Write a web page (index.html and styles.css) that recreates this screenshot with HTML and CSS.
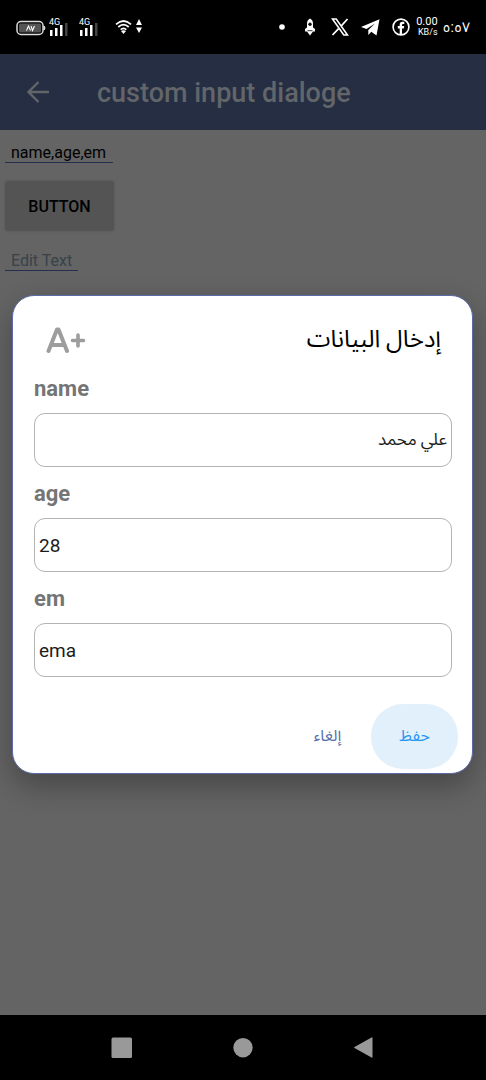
FILE: index.html
```html
<!DOCTYPE html>
<html lang="ar">
<head>
<meta charset="utf-8">
<meta name="viewport" content="width=device-width, initial-scale=1">
<title>custom input dialoge</title>
<link rel="stylesheet" href="styles.css">
</head>
<body class="phone">
<header class="status">
  <div class="status-group">
    <svg class="icon-battery" width="30" height="16" viewBox="0 0 30 16"><rect x="1" y="1.500" width="26" height="13" rx="4" fill="none" stroke="#ddd" stroke-width="1.500"/><rect x="3" y="3.500" width="22" height="9" rx="1.500" fill="#555"/><path d="M28 6q2 2 0 4z" fill="#ddd" stroke="#ddd"/><path d="M10.500 10.500l2-4.500 2 4.500M15 6l1.500 4.500 2-4.500" fill="none" stroke="#fff" stroke-width="1.100"/></svg>
    <div class="signal"><span class="signal-label">4G</span>
      <svg width="19" height="13" viewBox="0 0 19 13"><path d="M1 7h2.500v6H1zM6 5h2.500v8H6zM11 2h2.500v11H11z" fill="#fff"/><path d="M16 0h2.500v13H16z" fill="#444"/></svg></div>
    <div class="signal"><span class="signal-label">4G</span>
      <svg width="19" height="13" viewBox="0 0 19 13"><path d="M1 7h2.500v6H1zM6 5h2.500v8H6zM11 2h2.500v11H11z" fill="#fff"/><path d="M16 0h2.500v13H16z" fill="#444"/></svg></div>
    <svg class="icon-wifi" width="28" height="16" viewBox="0 0 28 16"><g fill="none" stroke="#fff" stroke-width="1.700"><path d="M1 5.300q7.500-6.600 15 0M3.300 8q5.200-4.600 10.400 0M5.700 10.600q2.800-2.500 5.600 0"/></g><path d="M6 12q2.500-1.600 5 0l-2.500 3z" fill="#fff"/><path d="M24 0l3 6h-6zM24 14l-3-5.500h6z" fill="#fff"/></svg>
  </div>
  <div class="status-group status-end">
    <svg width="6" height="6" viewBox="0 0 6 6"><circle cx="3" cy="3" r="2.800" fill="#fff"/></svg>
    <svg class="icon-rocket" width="10" height="18" viewBox="0 0 10 18"><path d="M5 .5Q8 2 8 5.500v4l2 1.500v2.500H8L5 17.500 2 13.500H0V11l2-1.500v-4Q2 2 5 .5z" fill="#fff"/><circle cx="5" cy="6.300" r="1.700" fill="#111"/><path d="M2.500 12.700h5" stroke="#222" stroke-width=".9"/></svg>
    <svg class="icon-x" width="18" height="18" viewBox="0 0 18 18"><path d="M1.500 1h3.700l11.300 16h-3.700z" fill="#000" stroke="#fff" stroke-width="1.600"/><path d="M16.500 1l-6.300 7M7.600 10.600L1.500 17" stroke="#fff" stroke-width="1.800"/></svg>
    <svg class="icon-send" width="19" height="17" viewBox="0 0 19 17"><path d="M18.500.3L0 8l5.500 2L14 4.500 7.300 11v5l3-3.300 5.200 3.800z" fill="#fff"/></svg>
    <svg width="18" height="18" viewBox="0 0 18 18"><circle cx="9" cy="9" r="7.900" fill="none" stroke="#fff" stroke-width="1.600"/><path d="M7.700 16.500v-6H5.800V8h1.900V6.500q0-2.700 2.700-2.700h1.900v2.300H11q-1 0-1 1V8h2.200l-.4 2.500H10v6z" fill="#fff"/></svg>
    <div class="clock-group">
      <div class="speed"><span>0.00</span><span class="speed-unit">KB/s</span></div>
      <time class="clock" dir="ltr">٥:٥٧</time>
    </div>
  </div>
</header>

<div class="screen">
  <main class="app">
    <div class="appbar">
      <button class="back" type="button" aria-label="Back"><svg width="22" height="22" viewBox="0 0 22 22"><path d="M22 11H1.500M11.500 1l-10 10 10 10" fill="none" stroke="#626569" stroke-width="2.300"/></svg></button>
      <h1 class="title">custom input dialoge</h1>
    </div>
    <div class="content">
      <input class="line-input line-wide" type="text" value="name,age,em" aria-label="Fields">
      <button class="raised" type="button">BUTTON</button>
      <input class="line-input line-short" type="text" placeholder="Edit Text" aria-label="Edit Text">
    </div>
  </main>

  <div class="overlay">
    <form class="dialog" role="dialog" aria-labelledby="dialog-title">
      <div class="dialog-head">
        <svg width="41" height="28" viewBox="0 0 41 28" role="img" aria-label="A+"><path d="M2.500 25L11 3.500h1.500L21 25M6 19h11.500" fill="none" stroke="#9d9d9d" stroke-width="4" stroke-linecap="round" stroke-linejoin="round"/><path d="M26.500 14.500h11M32 9v11" fill="none" stroke="#9d9d9d" stroke-width="3.600" stroke-linecap="round"/></svg>
        <h2 class="dialog-title" id="dialog-title" dir="rtl">إدخال البيانات</h2>
      </div>
      <label class="label" for="name">name</label>
      <input class="field field-arabic" id="name" type="text" dir="rtl" value="علي محمد">
      <label class="label" for="age">age</label>
      <input class="field" id="age" type="text" value="28">
      <label class="label" for="em">em</label>
      <input class="field" id="em" type="text" value="ema">
      <div class="actions">
        <button class="action cancel" type="button">إلغاء</button>
        <button class="action save" type="button">حفظ</button>
      </div>
    </form>
  </div>
</div>

<nav class="navbar">
  <button class="nav" type="button" aria-label="Recents"><svg width="22" height="22" viewBox="0 0 22 22"><rect x=".5" y=".5" width="20.500" height="20.500" rx="1.500" fill="#999"/></svg></button>
  <button class="nav" type="button" aria-label="Home"><svg width="22" height="22" viewBox="0 0 22 22"><circle cx="11" cy="10.700" r="9.700" fill="#999"/></svg></button>
  <button class="nav" type="button" aria-label="Back"><svg width="22" height="22" viewBox="0 0 22 22"><path d="M19.500 1v19q0 1-1 .5l-17-9.500q-1-.5 0-1l17-9.500q1-.5 1 .5z" fill="#999"/></svg></button>
</nav>
</body>
</html>
```

FILE: styles.css
```css
* { box-sizing: border-box; }

body,
button,
input {
  font-family: Roboto, "Noto Sans Arabic", "Noto Naskh Arabic", "DejaVu Sans", sans-serif;
}

button {
  border: 0;
  padding: 0;
  background: none;
}

svg { display: block; flex: none; }

.phone {
  margin: 0;
  min-height: 100vh;
  display: flex;
  flex-direction: column;
  background: #000;
}

.status {
  height: 54px;
  padding: 0 16px;
  display: flex;
  align-items: center;
  justify-content: space-between;
  color: #fff;
}

.status-group {
  display: flex;
  align-items: center;
}

.status-end { gap: 12px; }

.icon-battery { margin: 2px 3px 0 0; }

.signal {
  width: 30px;
  display: flex;
  flex-direction: column;
}

.signal-label {
  font-size: 9px;
  line-height: 8px;
}

.signal svg { margin-top: -3px; }

.icon-wifi { margin-left: 6px; }

.icon-rocket { margin: 0 0 0 8px; }

.icon-x { margin-left: 4px; }

.clock-group {
  display: flex;
  align-items: center;
  gap: 5px;
  margin-left: -6px;
}

.speed {
  display: flex;
  flex-direction: column;
  align-items: flex-end;
  font-size: 11px;
  line-height: 10px;
}

.speed-unit { font-size: 9px; }

.clock { font-size: 14px; }

.screen {
  flex: 1;
  position: relative;
  display: flex;
  flex-direction: column;
}

.app {
  flex: 1;
  background: #646464;
}

.appbar {
  height: 76px;
  padding: 0 27px;
  display: flex;
  align-items: center;
  gap: 48px;
  background: #252e42;
}

.title {
  margin: 0;
  font-size: 27px;
  line-height: 34px;
  padding-top: 2px;
  font-weight: 500;
  color: #626569;
}

.content {
  padding: 13px 5px;
  display: flex;
  flex-direction: column;
  align-items: flex-start;
}

.line-input {
  height: 20px;
  padding: 0 0 0 6px;
  border: 0;
  border-bottom: 1px solid #252e4e;
  background: none;
  font-size: 16px;
  color: #000;
}

.line-input::placeholder { color: #36434a; opacity: 1; }
.line-wide { width: 108px; }
.line-short { width: 73px; }

.raised {
  width: 109px;
  height: 50px;
  margin: 18px 0 20px;
  border-radius: 3px;
  background: #545454;
  box-shadow: 0 0 2px #505050;
  font-size: 16px;
  font-weight: 500;
  color: #000;
}

.overlay {
  position: absolute;
  inset: 0;
  padding: 0 13px 0 12px;
  display: flex;
  align-items: center;
}

.dialog {
  flex: 1;
  padding: 0 20px 4px 21px;
  display: flex;
  flex-direction: column;
  border: 1px solid #5a6ba8;
  border-radius: 22px;
  background: #fff;
  box-shadow: 0 12px 30px rgba(0, 0, 0, 0.3);
}

.dialog-head {
  height: 66px;
  padding: 22px 11px 0 12px;
  display: flex;
  align-items: center;
  justify-content: space-between;
}

.dialog-title {
  margin: 0;
  font-size: 24px;
  line-height: 42px;
  padding-bottom: 2px;
  font-weight: 400;
  color: #000;
}

.label {
  padding-top: 2px;
  font-size: 22px;
  line-height: 49px;
  font-weight: 700;
  color: #757575;
}

.field {
  width: 100%;
  height: 54px;
  padding: 0 4px;
  border: 1px solid #b4b4b4;
  border-radius: 11px;
  background: #fff;
  font-size: 19px;
  color: #1c1c1c;
}

.field-arabic { font-size: 17px; }

.actions {
  margin: 27px -6px 0 0;
  display: flex;
  justify-content: flex-end;
}

.action {
  width: 87px;
  height: 65px;
  padding-bottom: 2px;
  border-radius: 32px;
  font-size: 16px;
}

.cancel { color: #5670a8; }

.save {
  background: #e2f0fc;
  color: #2196f3;
}

.navbar {
  height: 65px;
  padding: 0 61px;
  display: flex;
}

.nav {
  flex: 1;
  display: flex;
  align-items: center;
  justify-content: center;
}
```
